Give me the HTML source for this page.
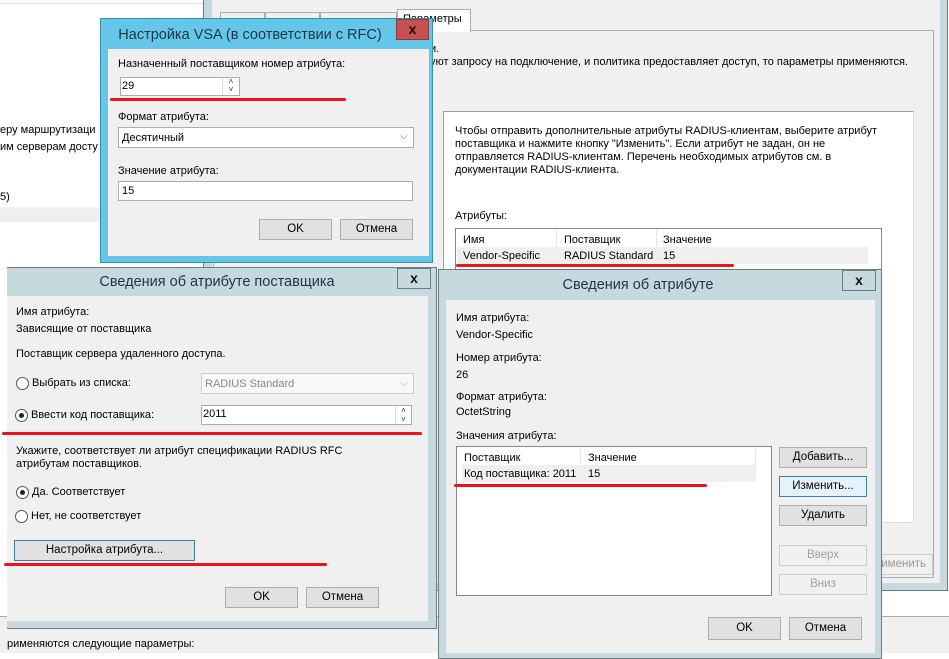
<!DOCTYPE html>
<html><head><meta charset="utf-8"><style>
*{margin:0;padding:0;box-sizing:border-box}
body{width:949px;height:653px;position:relative;overflow:hidden;background:#fff;font-family:"Liberation Sans","DejaVu Sans",sans-serif;font-size:11px;color:#000}
.a{position:absolute;white-space:nowrap;margin-top:1px}
.box{position:absolute}
.btn{position:absolute;background:#e1e1e1;border:1px solid #adadad;text-align:center;font-size:11.5px;line-height:19px}
.inp{position:absolute;background:#fff;border:1px solid #abadb3}
.red{position:absolute;height:3px;background:#e8161b;border-radius:2px}
.rad{position:absolute;width:13px;height:13px;border:1px solid #555;border-radius:50%;background:#fff}
.rad.on::after{content:"";position:absolute;left:3px;top:3px;width:5px;height:5px;border-radius:50%;background:#222}
.t{font-size:14.5px;color:#1e3544}
.x{position:absolute;text-align:center;font-weight:bold;font-size:14px;line-height:18px}
</style></head><body>

<div class="box" style="left:0;top:3px;width:205px;height:1px;background:#ddd"></div>
<div class="a" style="left:0;top:123px">еру маршрутизаци</div>
<div class="a" style="left:0;top:140px">им серверам досту</div>
<div class="a" style="left:0;top:190px">5)</div>
<div class="box" style="left:0;top:207px;width:205px;height:15px;background:#f0f0f0"></div>

<div class="box" style="left:203px;top:0;width:745px;height:591px;background:#c5d9df;border:1px solid #6d7a80;border-top:none"></div>
<div class="box" style="left:212px;top:0;width:728px;height:583px;background:#f0f0f0"></div>
<div class="box" style="left:213px;top:30px;width:721px;height:548px;border:1px solid #adadad;background:#f0f0f0"></div>
<div class="box" style="left:220px;top:12px;width:45px;height:19px;border:1px solid #adadad;border-bottom:none;background:#f0f0f0"></div>
<div class="box" style="left:265px;top:12px;width:55px;height:19px;border:1px solid #adadad;border-bottom:none;background:#f0f0f0"></div>
<div class="box" style="left:320px;top:12px;width:77px;height:19px;border:1px solid #adadad;border-bottom:none;background:#f0f0f0"></div>
<div class="box" style="left:397px;top:9px;width:74px;height:23px;border:1px solid #adadad;border-bottom:none;background:#fff"></div>
<div class="a" style="left:403px;top:12px">Параметры</div>
<div class="a" style="left:430px;top:42px">и.</div>
<div class="a" style="left:430px;top:55px">уют запросу на подключение, и политика предоставляет доступ, то параметры применяются.</div>
<div class="box" style="left:443px;top:111px;width:471px;height:412px;background:#fff;border:1px solid #a0a0a0;border-right-color:#ddd;border-bottom-color:#ddd"></div>
<div class="a" style="left:455px;top:124px;line-height:13px">Чтобы отправить дополнительные атрибуты RADIUS-клиентам, выберите атрибут<br>поставщика и нажмите кнопку "Изменить". Если атрибут не задан, он не<br>отправляется RADIUS-клиентам. Перечень необходимых атрибутов см. в<br>документации RADIUS-клиента.</div>
<div class="a" style="left:455px;top:209px">Атрибуты:</div>
<div class="box" style="left:455px;top:228px;width:427px;height:60px;border:1px solid #828790;background:#fff"></div>
<div class="box" style="left:457px;top:230px;width:100px;height:16px;border-right:1px solid #e5e5e5"></div>
<div class="box" style="left:558px;top:230px;width:99px;height:16px;border-right:1px solid #e5e5e5"></div>
<div class="box" style="left:457px;top:247px;width:411px;height:17px;background:#efefef"></div>
<div class="a" style="left:463px;top:233px">Имя</div>
<div class="a" style="left:564px;top:233px">Поставщик</div>
<div class="a" style="left:663px;top:233px">Значение</div>
<div class="a" style="left:463px;top:249px">Vendor-Specific</div>
<div class="a" style="left:564px;top:249px">RADIUS Standard</div>
<div class="a" style="left:663px;top:249px">15</div>
<div class="red" style="left:456px;top:264px;width:278px"></div>
<div class="btn" style="left:870px;top:554px;width:63px;height:21px;color:#9a9a9a;background:#f0f0f0;border-color:#ccc;text-align:right;padding-right:6px">рименить</div>
<div class="box" style="left:0;top:616px;width:949px;height:37px;background:#f0f0f0;border-top:1px solid #aaa"></div>
<div class="a" style="left:7px;top:637px">рименяются следующие параметры:</div>

<div class="box" style="left:100px;top:18px;width:333px;height:245px;background:#64c7ea;border:1px solid #3a8fb0"></div>
<div class="a t" style="left:100px;top:26px;width:300px;text-align:center">Настройка VSA (в соответствии с RFC)</div>
<div class="x" style="left:396px;top:19px;width:33px;height:21px;background:#c75050;border:1px solid #8a3a3a;color:#111">x</div>
<div class="box" style="left:108px;top:49px;width:321px;height:207px;background:#f0f0f0"></div>
<div class="a" style="left:118px;top:57px">Назначенный поставщиком номер атрибута:</div>
<div class="inp" style="left:120px;top:77px;width:120px;height:19px"></div>
<div class="a" style="left:122px;top:79px">29</div>
<div class="box" style="left:222px;top:78px;width:17px;height:17px;border-left:1px solid #ddd;font-size:8px;line-height:8px;text-align:center;color:#333">˄<br>˅</div>
<div class="red" style="left:110px;top:98px;width:236px"></div>
<div class="a" style="left:118px;top:110px">Формат атрибута:</div>
<div class="inp" style="left:118px;top:127px;width:296px;height:21px;border-color:#acacac"></div>
<div class="a" style="left:122px;top:131px">Десятичный</div>
<div class="a" style="left:400px;top:130px;color:#666;font-size:10px">⌵</div>
<div class="a" style="left:118px;top:164px">Значение атрибута:</div>
<div class="inp" style="left:118px;top:181px;width:295px;height:20px"></div>
<div class="a" style="left:122px;top:184px">15</div>
<div class="btn" style="left:259px;top:219px;width:73px;height:21px">OK</div>
<div class="btn" style="left:340px;top:219px;width:73px;height:21px">Отмена</div>

<div class="box" style="left:7px;top:267px;width:430px;height:362px;background:#c5d9df;border:1px solid #6d7a80;border-left:none"></div>
<div class="a t" style="left:7px;top:273px;width:420px;text-align:center">Сведения об атрибуте поставщика</div>
<div class="x" style="left:397px;top:268px;width:34px;height:21px;border:1px solid #6d7a80;color:#111">x</div>
<div class="box" style="left:7px;top:296px;width:421px;height:325px;background:#f0f0f0"></div>
<div class="a" style="left:16px;top:305px">Имя атрибута:</div>
<div class="a" style="left:16px;top:322px">Зависящие от поставщика</div>
<div class="a" style="left:16px;top:347px">Поставщик сервера удаленного доступа.</div>
<div class="rad" style="left:16px;top:377px"></div>
<div class="a" style="left:32px;top:376px">Выбрать из списка:</div>
<div class="inp" style="left:201px;top:373px;width:213px;height:21px;background:#f8f8f8;border-color:#ccc"></div>
<div class="a" style="left:205px;top:377px;color:#888">RADIUS Standard</div>
<div class="a" style="left:400px;top:377px;color:#aaa;font-size:10px">⌵</div>
<div class="rad on" style="left:15px;top:409px"></div>
<div class="a" style="left:31px;top:408px">Ввести код поставщика:</div>
<div class="inp" style="left:201px;top:405px;width:211px;height:20px"></div>
<div class="a" style="left:203px;top:407px">2011</div>
<div class="box" style="left:395px;top:406px;width:16px;height:18px;border-left:1px solid #ddd;font-size:8px;line-height:9px;text-align:center;color:#333">˄<br>˅</div>
<div class="red" style="left:2px;top:432px;width:420px"></div>
<div class="a" style="left:16px;top:444px;line-height:13px">Укажите, соответствует ли атрибут спецификации RADIUS RFC<br>атрибутам поставщиков.</div>
<div class="rad on" style="left:16px;top:486px"></div>
<div class="a" style="left:32px;top:485px">Да. Соответствует</div>
<div class="rad" style="left:15px;top:510px"></div>
<div class="a" style="left:31px;top:509px">Нет, не соответствует</div>
<div class="btn" style="left:14px;top:540px;width:181px;height:21px;border-color:#3c7fb1">Настройка атрибута...</div>
<div class="red" style="left:4px;top:563px;width:323px"></div>
<div class="btn" style="left:225px;top:587px;width:73px;height:21px">OK</div>
<div class="btn" style="left:306px;top:587px;width:73px;height:21px">Отмена</div>

<div class="box" style="left:438px;top:269px;width:444px;height:390px;background:#c5d9df;border:1px solid #6d7a80"></div>
<div class="a t" style="left:438px;top:276px;width:400px;text-align:center">Сведения об атрибуте</div>
<div class="x" style="left:842px;top:270px;width:34px;height:21px;border:1px solid #6d7a80;color:#111">x</div>
<div class="box" style="left:446px;top:300px;width:429px;height:353px;background:#f0f0f0"></div>
<div class="a" style="left:456px;top:311px">Имя атрибута:</div>
<div class="a" style="left:456px;top:328px">Vendor-Specific</div>
<div class="a" style="left:456px;top:351px">Номер атрибута:</div>
<div class="a" style="left:456px;top:368px">26</div>
<div class="a" style="left:456px;top:390px">Формат атрибута:</div>
<div class="a" style="left:456px;top:405px">OctetString</div>
<div class="a" style="left:456px;top:429px">Значения атрибута:</div>
<div class="box" style="left:456px;top:446px;width:316px;height:150px;background:#fff;border:1px solid #828790"></div>
<div class="box" style="left:458px;top:449px;width:123px;height:16px;border-right:1px solid #e5e5e5"></div>
<div class="box" style="left:582px;top:449px;width:174px;height:16px;border-right:1px solid #e5e5e5"></div>
<div class="box" style="left:462px;top:465px;width:294px;height:17px;background:#efefef"></div>
<div class="a" style="left:464px;top:451px">Поставщик</div>
<div class="a" style="left:588px;top:451px">Значение</div>
<div class="a" style="left:464px;top:467px">Код поставщика: 2011</div>
<div class="a" style="left:588px;top:467px">15</div>
<div class="red" style="left:454px;top:484px;width:253px"></div>
<div class="btn" style="left:779px;top:447px;width:88px;height:21px">Добавить...</div>
<div class="btn" style="left:779px;top:476px;width:88px;height:21px;border-color:#3c7fb1;background:#e5f1fb">Изменить...</div>
<div class="btn" style="left:779px;top:505px;width:88px;height:21px">Удалить</div>
<div class="btn" style="left:779px;top:545px;width:88px;height:21px;color:#a0a0a0;background:#f0f0f0;border-color:#ccc">Вверх</div>
<div class="btn" style="left:779px;top:574px;width:88px;height:21px;color:#a0a0a0;background:#f0f0f0;border-color:#ccc">Вниз</div>
<div class="btn" style="left:708px;top:617px;width:73px;height:23px;line-height:21px">OK</div>
<div class="btn" style="left:789px;top:617px;width:73px;height:23px;line-height:21px">Отмена</div>
</body></html>
